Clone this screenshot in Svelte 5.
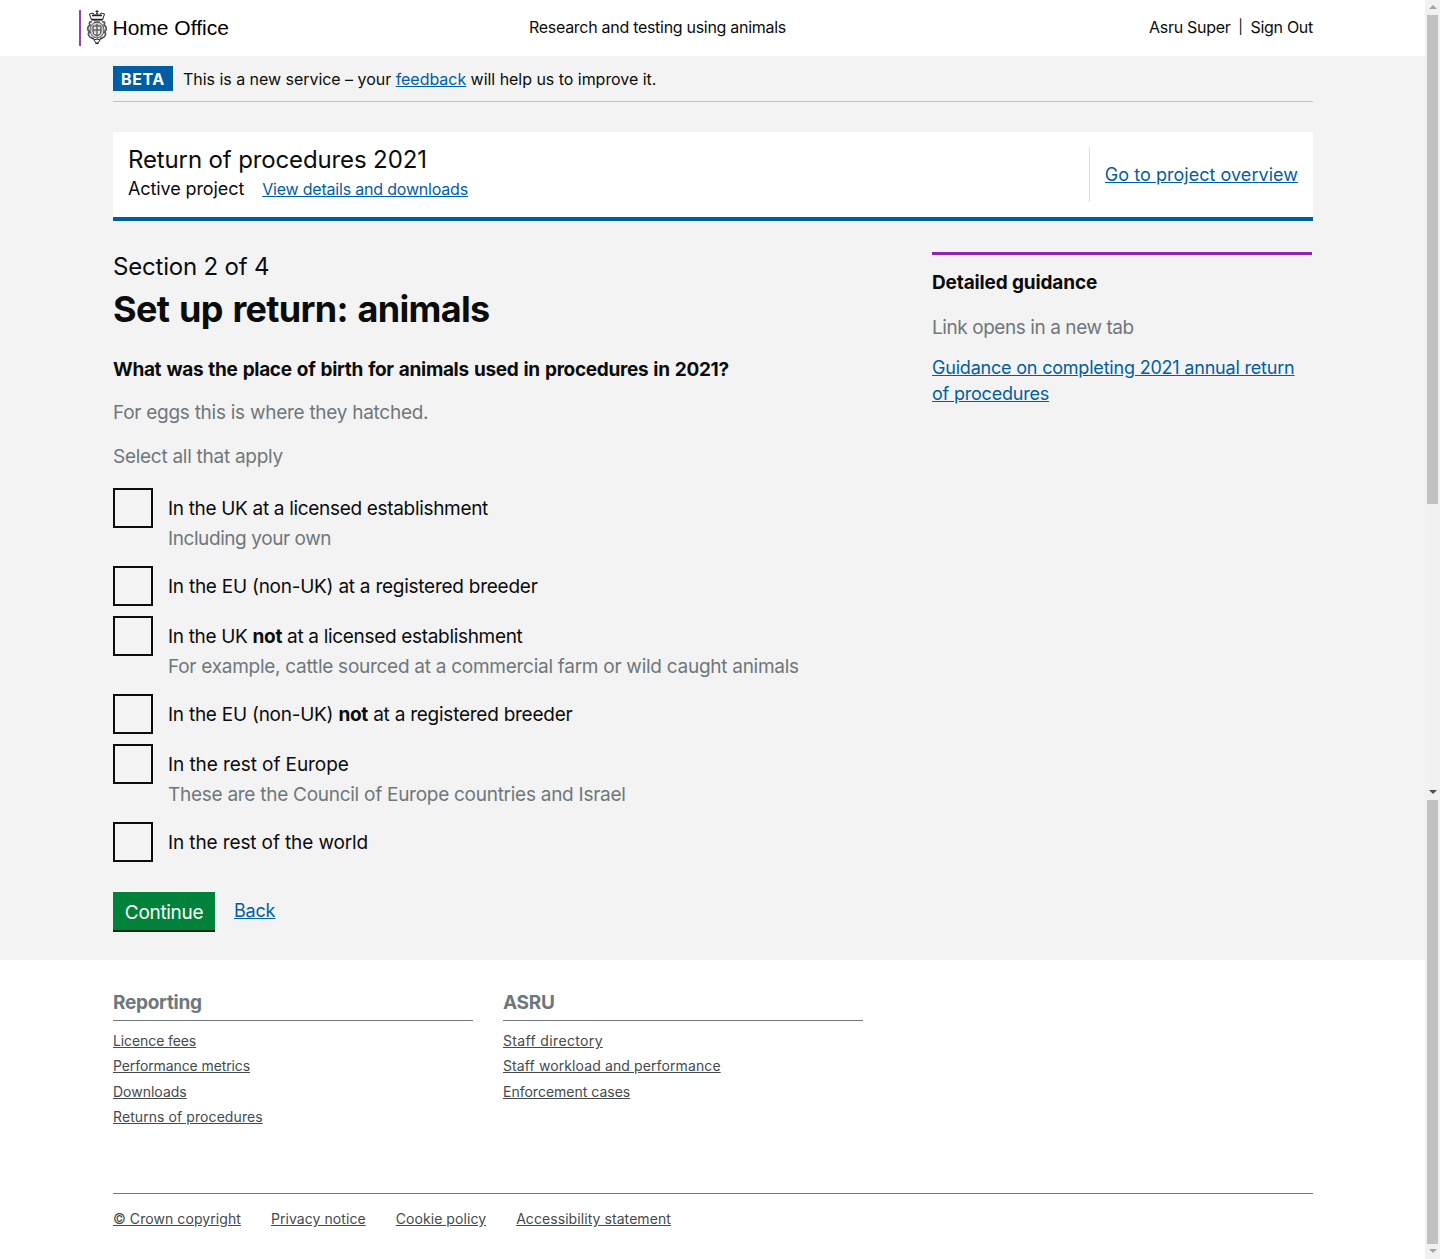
<script>
  const options = [
    { pre: 'In the UK at a licensed establishment', hint: 'Including your own' },
    { pre: 'In the EU (non-UK) at a registered breeder' },
    { pre: 'In the UK ', bold: 'not', post: ' at a licensed establishment', hint: 'For example, cattle sourced at a commercial farm or wild caught animals' },
    { pre: 'In the EU (non-UK) ', bold: 'not', post: ' at a registered breeder' },
    { pre: 'In the rest of Europe', hint: 'These are the Council of Europe countries and Israel' },
    { pre: 'In the rest of the world' }
  ];
  const columns = [
    { title: 'Reporting', links: ['Licence fees', 'Performance metrics', 'Downloads', 'Returns of procedures'] },
    { title: 'ASRU', links: ['Staff directory', 'Staff workload and performance', 'Enforcement cases'] }
  ];
  const legal = ['© Crown copyright', 'Privacy notice', 'Cookie policy', 'Accessibility statement'];
</script>

<div class="screen">
  <div class="page">
    <header>
      <div class="logo">
        <svg class="crest" width="20" height="36" viewBox="0 0 20 36" fill="none" stroke="#222" stroke-width="1">
          <!-- crown -->
          <path d="M10 0V4 M8.500 1.500H11.500 M2.500 4L4.500 10H15.500L17.500 4 M2.500 4L6 3L8 6L10 3L12 6L14 3L17.500 4" />
          <path d="M4.500 9.500H15.500 M5 5.500H15" stroke-width="1.600" />
          <!-- shield and garter -->
          <ellipse cx="10" cy="20" rx="7" ry="8" fill="#ccc" stroke="#555" />
          <path d="M6 16H14V21Q14 25 10 26Q6 25 6 21Z M10 14V26 M6 20H14 M7 12H13" stroke="#444" />
          <path d="M8 17V19 M12 21V24 M12 17V19 M8 22V24" stroke="#fff" />
          <!-- lion and unicorn -->
          <path d="M5 12Q2 11 2.500 14L3 15Q0 17 1 20L2.500 22Q0 24 3 27L7 29 M15 12Q18 11 17.500 14L17 15Q20 17 19 20L17.500 22Q20 24 17 27L13 29" stroke="#555" stroke-width="1.700" />
          <!-- motto ribbon -->
          <path d="M5 28Q8 31 10 29Q12 31 15 28 M7 30L9 33H11L13 30 M8.500 33.500H11.500" />
        </svg>
        <span>Home Office</span>
      </div>
      <div class="service">Research and testing using animals</div>
      <div class="user"><span>Asru Super</span><span class="sep">|</span><span>Sign Out</span></div>
    </header>
    <div class="body">
      <div class="phase">
        <strong>BETA</strong>
        <span>This is a new service – your <a href="#top">feedback</a> will help us to improve it.</span>
      </div>
      <div class="banner">
        <div>
          <div class="btitle">Return of procedures 2021</div>
          <div class="bsub">Active project<a href="#top">View details and downloads</a></div>
        </div>
        <div class="overview"><a href="#top">Go to project overview</a></div>
      </div>
      <div class="cols">
        <main>
          <div class="section">Section 2 of 4</div>
          <h1>Set up return: animals</h1>
          <h2>What was the place of birth for animals used in procedures in 2021?</h2>
          <p>For eggs this is where they hatched.</p>
          <p>Select all that apply</p>
          <div class="options">
            {#each options as o}
              <div class="option">
                <span class="box"></span>
                <div>
                  <div class="label">{o.pre}{#if o.bold}<b>{o.bold}</b>{/if}{o.post ?? ''}</div>
                  {#if o.hint}<div class="hint">{o.hint}</div>{/if}
                </div>
              </div>
            {/each}
          </div>
          <div class="actions"><button>Continue</button><a href="#top">Back</a></div>
        </main>
        <aside>
          <h3>Detailed guidance</h3>
          <p>Link opens in a new tab</p>
          <a href="#top">Guidance on completing 2021 annual return of procedures</a>
        </aside>
      </div>
    </div>
    <footer>
      <div class="fcols">
        {#each columns as c}
          <div class="fcol">
            <h4>{c.title}</h4>
            {#each c.links as l}<div class="flink"><a href="#top">{l}</a></div>{/each}
          </div>
        {/each}
      </div>
      <div class="legal">{#each legal as l}<a href="#top">{l}</a>{/each}</div>
    </footer>
  </div>
  <div class="bars">
    <div class="bar first"><i class="up"></i><span class="thumb"></span><i class="down dark"></i></div>
    <div class="bar second"><span class="thumb"></span><i class="down"></i></div>
  </div>
</div>

<style>
  :global(body) { margin: 0; background: #fff; }
  .screen { display: flex; width: 1440px; height: 1259px; overflow: hidden; font-family: Inter, "Liberation Sans", sans-serif; color: #0b0c0c; }
  .screen * { box-sizing: border-box; }
  .page { width: 1425px; display: flex; flex-direction: column; }
  a { color: #005ea5; text-decoration: underline; }
  h1, h2, h3, h4, p { margin: 0; }
  header { height: 56px; display: grid; grid-template-columns: 450px 1fr 300px; padding: 0 112px 0 79px; font-size: 16px; line-height: 24px; letter-spacing: -.29px; }
  .logo { display: flex; height: 36px; margin-top: 10px; border-left: 2px solid #8f44ab; padding-left: 6px; gap: 5.5px; align-items: center; font: 21px/36px "Liberation Sans", sans-serif; letter-spacing: 0; color: #000; }
  .service { padding-top: 15px; }
  .user { padding-top: 15px; display: flex; justify-content: flex-end; gap: 8px; }
  .sep { width: 4px; display: flex; justify-content: center; font-size: 14px; }
  .body { height: 904px; background: #f3f3f3; padding: 0 112px 0 113px; }
  .phase { height: 46px; border-bottom: 1px solid #bfc1c3; padding-top: 10px; display: flex; gap: 10px; font-size: 16px; line-height: 26px; letter-spacing: -.035px; }
  .phase strong { background: #005ea5; color: #fff; height: 25px; width: 60px; padding-left: 8px; letter-spacing: .6px; }
  .banner { margin-top: 30px; height: 89px; background: #fff; border-bottom: 4px solid #005ea5; padding: 15px; display: flex; justify-content: space-between; }
  .btitle { font-size: 24px; line-height: 26px; letter-spacing: -.13px; }
  .bsub { font-size: 18px; line-height: 32px; display: flex; gap: 18px; letter-spacing: -.1px; }
  .bsub a { font-size: 16px; line-height: 32px; letter-spacing: -.2px; }
  .overview { border-left: 1px solid #dee0e2; padding-left: 15px; height: 55px; font-size: 18px; line-height: 55px; letter-spacing: .035px; }
  .cols { display: flex; justify-content: space-between; padding-top: 31px; }
  main { width: 789px; }
  .section { font-size: 24px; line-height: 30px; letter-spacing: -.2px; }
  h1 { font-size: 36px; line-height: 54px; letter-spacing: -.68px; word-spacing: 1.9px; }
  h2 { font-size: 19px; line-height: 25px; margin-top: 21px; letter-spacing: -.32px; word-spacing: .95px; }
  p { font-size: 19px; line-height: 25px; color: #6f777b; letter-spacing: -.27px; }
  main p { margin-top: 18px; }
  main p + p { margin-top: 19px; }
  .options { margin-top: 19px; display: flex; flex-direction: column; gap: 10px; }
  .option { display: flex; gap: 15px; min-height: 40px; letter-spacing: -.25px; }
  .option:nth-child(1), .option:nth-child(3) { letter-spacing: -.32px; }
  .option:nth-child(5) .label { letter-spacing: -.08px; }
  .option:nth-child(6) { letter-spacing: -.12px; }
  .box { width: 40px; height: 40px; border: 2px solid #0b0c0c; }
  .label { font-size: 19px; line-height: 42px; height: 40px; }
  .hint { font-size: 19px; line-height: 22px; height: 28px; color: #6f777b; letter-spacing: -.27px; }
  .option:first-child .hint { letter-spacing: -.42px; }
  .actions { margin-top: 30px; display: flex; gap: 19px; font-size: 18px; line-height: 38px; letter-spacing: -.2px; }
  button { width: 102px; height: 40px; border: 0; border-bottom: 2px solid #002d18; background: #00823b; color: #fff; font: 19px/36px Inter, sans-serif; letter-spacing: -.32px; padding: 3px 0 0; }
  aside { width: 380px; margin-right: 1px; border-top: 3px solid #8f23b3; font-size: 18px; line-height: 26px; letter-spacing: -.2px; }
  h3 { font-size: 19px; line-height: 25px; margin-top: 15px; letter-spacing: -.14px; }
  aside p { margin: 20px 0 15px; letter-spacing: -.43px; }
  footer { padding: 30px 112px 0 113px; }
  .fcols { display: flex; gap: 30px; height: 203px; }
  .fcol { width: 360px; }
  h4 { font-size: 19px; line-height: 25px; height: 31px; color: #6f777b; border-bottom: 1px solid #6f777b; margin-bottom: 7px; letter-spacing: -.28px; }
  footer a { color: #454a4d; font-size: 14px; }
  .flink { font-size: 14px; line-height: 25.4px; }
  .fcol:first-child .flink:nth-child(2), .fcol:first-child .flink:nth-child(3) { letter-spacing: -.1px; }
  .flink:nth-child(5) { letter-spacing: .08px; }
  .fcol:last-child .flink:nth-child(2) { letter-spacing: .35px; }
  .fcol:last-child .flink:nth-child(3) { letter-spacing: .11px; }
  .legal { border-top: 1px solid #6f777b; padding-top: 12px; display: flex; gap: 30px; line-height: 26px; letter-spacing: .07px; }
  .bars { width: 15px; background: #f1f1f1; }
  .bar { display: flex; flex-direction: column; align-items: center; }
  .thumb { width: 11px; background: #c1c1c1; }
  .first { height: 800px; }
  .first .thumb { height: 489px; margin-top: 6px; }
  .second .thumb { height: 444px; }
  i { border: 4px solid transparent; width: 0; height: 0; }
  .up { border-top: 0; border-bottom-color: #a3a3a3; margin-top: 5px; }
  .down { border-bottom: 0; border-top-color: #a3a3a3; }
  .dark { border-top-color: #505050; margin-top: 286px; }
  .second .down { margin-top: 5px; }
</style>
